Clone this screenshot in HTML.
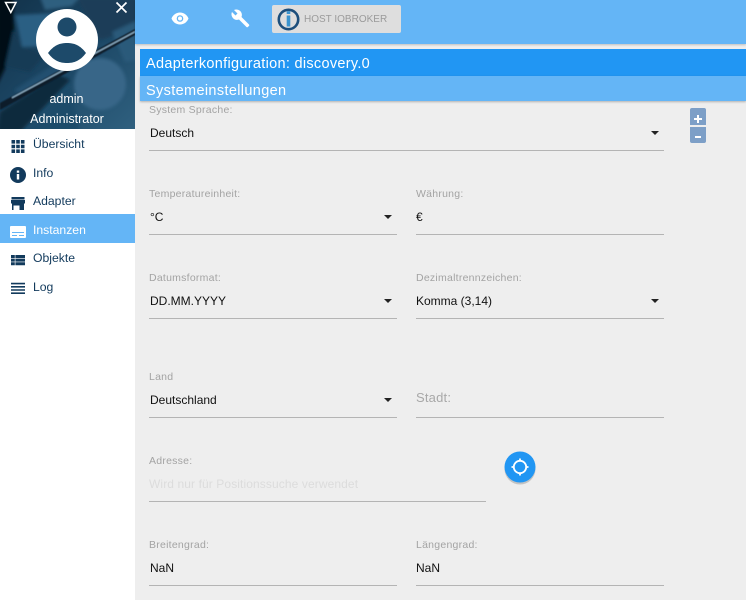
<!DOCTYPE html>
<html lang="de">
<head>
<meta charset="utf-8">
<title>Adapterkonfiguration</title>
<style>
html,body{margin:0;padding:0;width:746px;height:600px;overflow:hidden;background:#eee;font-family:"Liberation Sans",sans-serif;}
.a{position:absolute;white-space:nowrap;}
#side{left:0;top:0;width:135px;height:600px;background:#fff;}
.menu{left:33px;font-size:12.2px;color:#123a5c;line-height:16px;}
.ic{position:absolute;left:10px;}
.lb{font-size:10.5px;color:#a3a3a3;line-height:12px;letter-spacing:.25px;}
.val{font-size:12px;color:#111;line-height:16px;}
.ln{height:1px;background:#b4b4b4;}
.ar{width:0;height:0;border-left:4px solid transparent;border-right:4px solid transparent;border-top:4px solid #222;}
</style>
</head>
<body>
<div class="a" id="side"></div>

<svg class="a" style="left:0;top:0" width="135" height="129" viewBox="0 0 135 129">
<defs>
<linearGradient id="g" x1="0" y1="0" x2="1" y2="1"><stop offset="0" stop-color="#12324a"/><stop offset=".5" stop-color="#1c4765"/><stop offset="1" stop-color="#2f607f"/></linearGradient>
<filter id="b" x="-10%" y="-10%" width="120%" height="120%"><feGaussianBlur stdDeviation="1.6"/></filter>
<filter id="s"><feGaussianBlur stdDeviation=".5"/></filter>
</defs>
<rect width="135" height="129" fill="url(#g)"/>
<g filter="url(#b)">
<path d="M-3 -3H13L14 30L8 62L-3 85Z" fill="#050c12"/>
<path d="M15 15L58 13L52 46L22 47Z" fill="#2a5f83"/>
<path d="M13 30L22 47L45 55L30 72L5 66Z" fill="#153a54"/>
<path d="M76 -3H138V28L100 40Z" fill="#1a3e58"/>
<path d="M40 -3L80 -3L72 6L45 10Z" fill="#2f5f7f"/>
<path d="M14 90L58 62L70 70L30 100Z" fill="#24506f"/>
<circle cx="100" cy="84" r="26" fill="#386688"/>
<path d="M0 112L58 74L70 80L20 132H-3Z" fill="#0f2a3d"/>
<path d="M25 132L70 86L80 132Z" fill="#1f4c6b"/>
<path d="M112 32L138 20V60L125 62Z" fill="#2a5a7a"/>
</g>
<g filter="url(#s)">
<path d="M0 103L135 29V35L0 110Z" fill="#0a1c2a"/>
<path d="M12 97L135 31V32.500L12 98.500Z" fill="#8fb1c8"/>
</g>
</svg>

<!-- avatar -->
<svg class="a" style="left:36px;top:9px" width="62" height="62" viewBox="0 0 62 62">
<circle cx="31" cy="31" r="31" fill="#fff"/>
<circle cx="31" cy="18" r="9.500" fill="#1d4a6a"/>
<path d="M12 44C18 36 24 34 31 34S44 36 50 44C44 52 38 54 31 54S18 52 12 44Z" fill="#1d4a6a"/>
</svg>
<svg class="a" style="left:4px;top:1px" width="14" height="13" viewBox="0 0 14 13"><path d="M1.500 1.500H12L6.800 11.500Z" fill="none" stroke="#fff" stroke-width="1.500"/></svg>
<svg class="a" style="left:115px;top:1px" width="13" height="13" viewBox="0 0 13 13"><path d="M1.500 1.500L11.500 11.500M11.500 1.500L1.500 11.500" stroke="#fff" stroke-width="1.700"/></svg>
<div class="a" style="left:0;top:91px;width:133px;text-align:center;color:#fff;font-size:12.500px;line-height:16px;">admin</div>
<div class="a" style="left:0;top:111px;width:134px;text-align:center;color:#fff;font-size:12.500px;line-height:16px;">Administrator</div>

<!-- menu -->
<div class="a" style="left:0;top:214px;width:135px;height:29px;background:#64b5f6;"></div>
<svg class="ic" style="top:139px" width="16" height="16" viewBox="0 0 16 16" fill="#123a5c"><path d="M1.500 1h3.600v3.600H1.500zM6.200 1h3.600v3.600H6.200zM10.900 1h3.600v3.600h-3.600zM1.500 5.700h3.600v3.600H1.500zM6.200 5.700h3.600v3.600H6.200zM10.900 5.700h3.600v3.600h-3.600zM1.500 10.400h3.600V14H1.500zM6.200 10.400h3.600V14H6.200zM10.900 10.400h3.600V14h-3.600z"/></svg>
<svg class="ic" style="top:167px" width="16" height="16" viewBox="0 0 16 16"><circle cx="8" cy="8" r="8" fill="#123a5c"/><path d="M6.800 7h2.400v5.500H6.800zM6.800 3.500h2.400v2.200H6.800z" fill="#fff"/></svg>
<svg class="ic" style="top:195px" width="16" height="16" viewBox="0 0 16 16" fill="#123a5c"><path d="M1.500 2h13v2.500h-13zM1 5h14v3.500H1zM2 8.500h12V15H9.500v-4.500h-6V15H2zM11 10h1.500v5H11z"/></svg>
<svg class="ic" style="top:225px" width="16" height="14" viewBox="0 0 16 14"><rect x="0" y="1" width="16" height="12" rx="1" fill="#fff"/><path d="M2 7h12v1H2zM2 10h5v1H2zM9 10h5v1H9z" fill="#64b5f6"/></svg>
<svg class="ic" style="top:253px" width="16" height="14" viewBox="0 0 16 14" fill="#123a5c"><path d="M1 2h3.800v3H1zM5.400 2H15v3H5.400zM1 5.600h3.800v3H1zM5.400 5.600H15v3H5.400zM1 9.200h3.800v3H1zM5.400 9.200H15v3H5.400z"/></svg>
<svg class="ic" style="top:281px" width="16" height="14" viewBox="0 0 16 14" fill="#123a5c"><path d="M1 1.800h14v1.600H1zM1 5h14v1.600H1zM1 8.200h14v1.600H1zM1 11.400h14V13H1z"/></svg>
<div class="a menu" style="top:136px">Übersicht</div>
<div class="a menu" style="top:165px">Info</div>
<div class="a menu" style="top:193px">Adapter</div>
<div class="a menu" style="top:222px;color:#fff">Instanzen</div>
<div class="a menu" style="top:250px">Objekte</div>
<div class="a menu" style="top:279px">Log</div>

<!-- top bar -->
<div class="a" style="left:135px;top:0;width:611px;height:44px;background:#64b5f6;box-shadow:0 1px 2px rgba(0,0,0,.2);"></div>
<svg class="a" style="left:171px;top:12px" width="18" height="13" viewBox="0 0 18 13"><path fill-rule="evenodd" d="M9 .5C5 .5 1.800 3 .5 6.500 1.800 10 5 12.500 9 12.500S16.200 10 17.500 6.500C16.200 3 13 .5 9 .5ZM9 3.200a3.300 3.300 0 1 1 0 6.600 3.300 3.300 0 0 1 0-6.600Z" fill="#fff"/><circle cx="9" cy="6.500" r="2" fill="#fff"/></svg>
<svg class="a" style="left:231px;top:9px" width="19" height="19" viewBox="0 0 19 19"><path d="M18 15.500L10.500 8C11.300 6 10.900 3.600 9.200 2 7.500.4 5 .1 3 1L6.500 4.500 4.500 6.500 1 3C0 5 .5 7.500 2.100 9.200 3.700 10.900 6 11.300 8 10.500L15.500 18C15.900 18.400 16.500 18.400 16.900 18L18 16.900C18.400 16.500 18.400 15.900 18 15.500Z" fill="#fff"/></svg>
<div class="a" style="left:272px;top:5px;width:129px;height:28px;background:#dedede;border-radius:2px;"></div>
<svg class="a" style="left:277px;top:8px" width="23" height="23" viewBox="0 0 23 23"><circle cx="11.500" cy="11.500" r="9.700" fill="none" stroke="#1d4f7c" stroke-width="2.600"/><rect x="9.700" y="7.500" width="3.600" height="11" fill="#3a94cf"/><rect x="9.700" y="3.200" width="3.600" height="2.800" fill="#3a94cf"/></svg>
<div class="a" style="left:304px;top:13px;font-size:10px;line-height:14px;color:#9b9b9b;">HOST IOBROKER</div>

<!-- headers -->
<div class="a" style="left:140px;top:49px;width:606px;height:27px;background:#2196f3;"></div>
<div class="a" style="left:140px;top:76px;width:606px;height:25px;background:#64b5f6;box-shadow:0 1px 2px rgba(0,0,0,.25);"></div>
<div class="a" style="left:146px;top:56px;font-size:14.500px;line-height:17px;color:#fff;letter-spacing:.3px;">Adapterkonfiguration: discovery.0</div>
<div class="a" style="left:146px;top:83px;font-size:14.500px;line-height:17px;color:#fff;letter-spacing:.35px;">Systemeinstellungen</div>

<!-- plus/minus -->
<div class="a" style="left:690px;top:108px;width:16px;height:17px;background:#7d9fc7;border-radius:2px 2px 0 0;"></div>
<div class="a" style="left:690px;top:127px;width:16px;height:16px;background:#7d9fc7;border-radius:0 0 2px 2px;"></div>
<div class="a" style="left:694px;top:118px;width:8px;height:1.500px;background:#fff;"></div>
<div class="a" style="left:697.250px;top:115px;width:1.500px;height:8px;background:#fff;"></div>
<div class="a" style="left:695px;top:136px;width:6px;height:1.500px;background:#fff;"></div>

<!-- form -->
<div class="a lb" style="left:149px;top:104px">System Sprache:</div>
<div class="a val" style="left:150px;top:125px">Deutsch</div>
<div class="a ar" style="left:651px;top:131px"></div>
<div class="a ln" style="left:149px;top:150px;width:515px"></div>

<div class="a lb" style="left:149px;top:188px">Temperatureinheit:</div>
<div class="a val" style="left:150px;top:209px">°C</div>
<div class="a ar" style="left:384px;top:215px"></div>
<div class="a ln" style="left:149px;top:234px;width:248px"></div>
<div class="a lb" style="left:416px;top:188px">Währung:</div>
<div class="a val" style="left:416px;top:209px">€</div>
<div class="a ln" style="left:416px;top:234px;width:248px"></div>

<div class="a lb" style="left:149px;top:272px">Datumsformat:</div>
<div class="a val" style="left:150px;top:293px">DD.MM.YYYY</div>
<div class="a ar" style="left:384px;top:299px"></div>
<div class="a ln" style="left:149px;top:318px;width:248px"></div>
<div class="a lb" style="left:416px;top:272px">Dezimaltrennzeichen:</div>
<div class="a val" style="left:416px;top:293px">Komma (3,14)</div>
<div class="a ar" style="left:651px;top:299px"></div>
<div class="a ln" style="left:416px;top:318px;width:248px"></div>

<div class="a lb" style="left:149px;top:371px">Land</div>
<div class="a val" style="left:150px;top:392px">Deutschland</div>
<div class="a ar" style="left:384px;top:398px"></div>
<div class="a ln" style="left:149px;top:417px;width:248px"></div>
<div class="a" style="left:416px;top:390px;font-size:13px;line-height:16px;color:#a8a8a8;letter-spacing:.2px;">Stadt:</div>
<div class="a ln" style="left:416px;top:417px;width:248px"></div>

<div class="a lb" style="left:149px;top:455px">Adresse:</div>
<div class="a" style="left:149px;top:476px;font-size:12px;line-height:16px;color:#dcdcdc;letter-spacing:.1px;">Wird nur für Positionssuche verwendet</div>
<div class="a ln" style="left:149px;top:501px;width:337px"></div>
<svg class="a" style="left:502px;top:450px" width="36" height="36" viewBox="0 0 36 36">
<circle cx="18" cy="19" r="15.500" fill="#000" opacity=".18"/>
<circle cx="18" cy="17" r="15.500" fill="#2196f3"/>
<circle cx="18" cy="17" r="6.200" fill="none" stroke="#fff" stroke-width="1.800"/>
<path d="M18 8.500v3M18 22.500v3M9.500 17h3M23.500 17h3" stroke="#fff" stroke-width="1.800"/>
</svg>

<div class="a lb" style="left:149px;top:539px">Breitengrad:</div>
<div class="a val" style="left:150px;top:560px">NaN</div>
<div class="a ln" style="left:149px;top:585px;width:248px"></div>
<div class="a lb" style="left:416px;top:539px">Längengrad:</div>
<div class="a val" style="left:416px;top:560px">NaN</div>
<div class="a ln" style="left:416px;top:585px;width:248px"></div>
</body>
</html>
